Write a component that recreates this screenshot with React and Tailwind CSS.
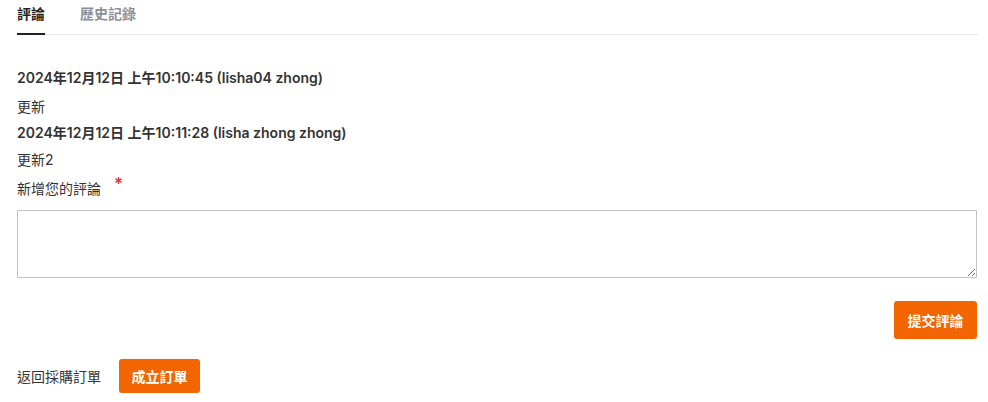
export default function App() {
  const font = { fontFamily: 'Inter, "Noto Sans CJK TC", sans-serif' };
  return (
    <div className="w-[988px] h-[402px] bg-white pl-[17px] pr-[10px] text-[#333]" style={font}>
      <div className="flex gap-[35px] border-b border-[#e5e7eb] text-[14px] font-semibold">
        <div className="pt-[3px] pb-[9px] border-b-2 border-[#222] text-[#222] -mb-px">評論</div>
        <div className="pt-[3px] pb-[9px] text-[#8b8f99]">歷史記錄</div>
      </div>
      <div className="pt-[32px] text-[14px]">
        <div className="font-semibold leading-[22px]">2024年12月12日 上午10:10:45 (lisha04 zhong)</div>
        <div className="mt-[8px] leading-[20px]">更新</div>
        <div className="mt-[5px] font-semibold leading-[22px]">2024年12月12日 上午10:11:28 (lisha zhong zhong)</div>
        <div className="mt-[6px] leading-[20px]">更新2</div>
        <div className="mt-[9px] leading-[20px] flex">
          新增您的評論
          <span className="text-[#e53935] ml-[13px] -mt-[5px] text-[17px] font-semibold">*</span>
        </div>
        <textarea className="mt-[11px] block w-[960px] h-[68px] border border-[#c4c4c4] outline-none" />
        <div className="flex justify-end mt-[23px] pr-px">
          <button className="w-[83px] h-[38px] rounded-[3px] bg-[#f26500] text-white font-semibold text-[14px]">提交評論</button>
        </div>
        <div className="flex items-center mt-[20px]">
          <span className="w-[102px]">返回採購訂單</span>
          <button className="w-[81px] h-[34px] rounded-[3px] bg-[#f26500] text-white font-semibold text-[14px]">成立訂單</button>
        </div>
      </div>
    </div>
  );
}
